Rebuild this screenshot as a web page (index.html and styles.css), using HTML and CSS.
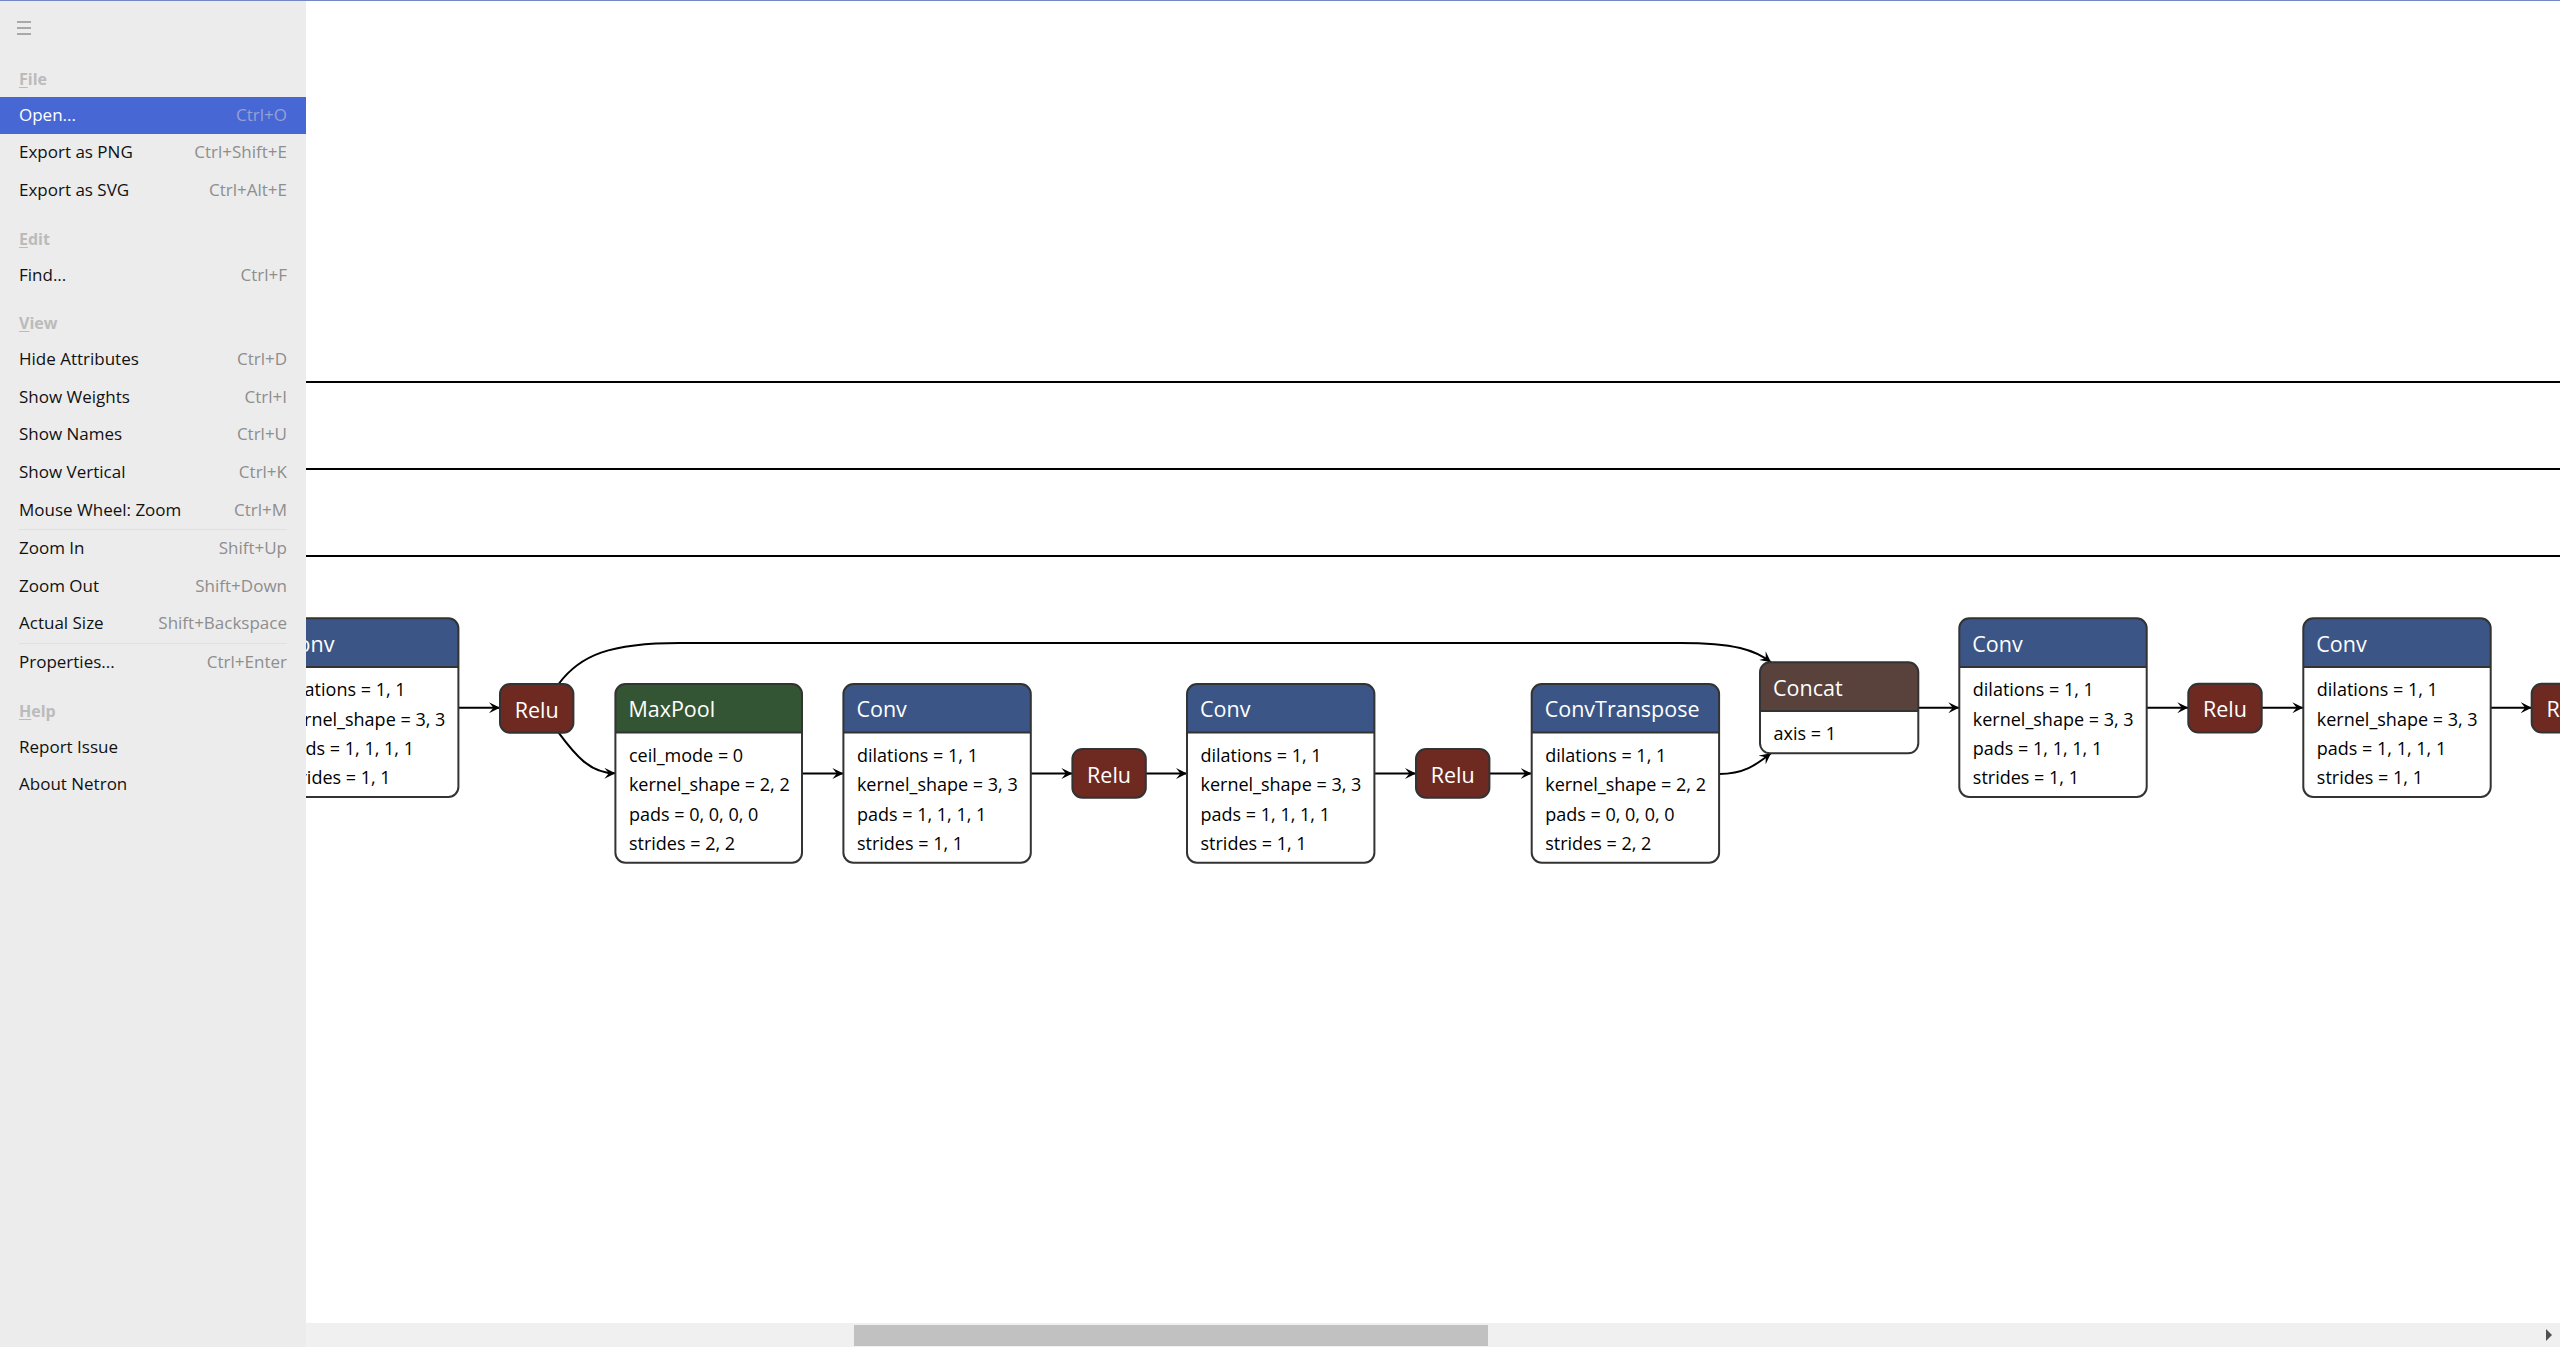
FILE: index.html
```html
<!DOCTYPE html>
<html lang="en">
<head>
<meta charset="utf-8">
<title>Netron</title>
<link rel="stylesheet" href="styles.css">
</head>
<body>
<div class="app">
  <aside class="menu">
    <div class="menu-top">
      <button class="hamburger" aria-label="Menu">
        <svg width="14" height="14" viewBox="0 0 14 14"><path d="M0 1H14M0 7H14M0 13H14" stroke="#a8a8a8" stroke-width="2"/></svg>
      </button>
    </div>
    <div class="group">
      <div class="group-header"><u>F</u>ile</div>
      <div class="item active"><span>Open...</span><span class="key">Ctrl+O</span></div>
      <div class="item"><span>Export as PNG</span><span class="key">Ctrl+Shift+E</span></div>
      <div class="item"><span>Export as SVG</span><span class="key">Ctrl+Alt+E</span></div>
    </div>
    <div class="group">
      <div class="group-header"><u>E</u>dit</div>
      <div class="item"><span>Find...</span><span class="key">Ctrl+F</span></div>
    </div>
    <div class="group">
      <div class="group-header"><u>V</u>iew</div>
      <div class="item"><span>Hide Attributes</span><span class="key">Ctrl+D</span></div>
      <div class="item"><span>Show Weights</span><span class="key">Ctrl+I</span></div>
      <div class="item"><span>Show Names</span><span class="key">Ctrl+U</span></div>
      <div class="item"><span>Show Vertical</span><span class="key">Ctrl+K</span></div>
      <div class="item"><span>Mouse Wheel: Zoom</span><span class="key">Ctrl+M</span></div>
      <div class="sep"></div>
      <div class="item"><span>Zoom In</span><span class="key">Shift+Up</span></div>
      <div class="item"><span>Zoom Out</span><span class="key">Shift+Down</span></div>
      <div class="item"><span>Actual Size</span><span class="key">Shift+Backspace</span></div>
      <div class="sep"></div>
      <div class="item"><span>Properties...</span><span class="key">Ctrl+Enter</span></div>
    </div>
    <div class="group">
      <div class="group-header"><u>H</u>elp</div>
      <div class="item"><span>Report Issue</span></div>
      <div class="item"><span>About Netron</span></div>
    </div>
  </aside>

  <main class="canvas">
    <div class="graph">
      <svg class="graph-svg" xmlns="http://www.w3.org/2000/svg">
        <defs>
          <marker id="arrow" viewBox="0 0 10 10" refX="10" refY="5" markerWidth="11" markerHeight="11" markerUnits="userSpaceOnUse" orient="auto">
            <path d="M0,0 L10,5 L0,10 L4,5 z" fill="#000"/>
          </marker>
        </defs>
        <g transform="translate(-306 -1)">
          <!-- horizontal lines -->
          <rect class="hline" x="306" y="381" width="2254" height="2"/>
          <rect class="hline" x="306" y="468" width="2254" height="2"/>
          <rect class="hline" x="306" y="555" width="2254" height="2"/>

          <!-- edges -->
          <path class="edge" d="M458,707.7 H500"/>
          <path class="edge" d="M558.6,684 C580,655 610,643 680,643 H1680 C1735,643 1755,650 1771,662.3"/>
          <path class="edge" d="M558.6,732.7 C575,755 590,773.3 615.4,773.3"/>
          <path class="edge" d="M802,773.5 H843.4"/>
          <path class="edge" d="M1031,773.5 H1072.4"/>
          <path class="edge" d="M1146,773.5 H1187"/>
          <path class="edge" d="M1374.6,773.5 H1416"/>
          <path class="edge" d="M1489.8,773.5 H1531.7"/>
          <path class="edge" d="M1719,774 C1745,774 1757,764 1771,753.3"/>
          <path class="edge" d="M1918.3,707.7 H1959.3"/>
          <path class="edge" d="M2146.7,707.7 H2188.3"/>
          <path class="edge" d="M2262,707.7 H2303.3"/>
          <path class="edge" d="M2490.7,707.7 H2531.7"/>

          <!-- Conv A -->
          <g transform="translate(271 618.3)">
            <path class="hdr layer" d="M0,48.6 V10 A10,10 0 0 1 10,0 H177.4 A10,10 0 0 1 187.4,10 V48.6 Z"/>
            <path class="body" d="M0,48.6 H187.4 V168.7 A10,10 0 0 1 177.4,178.7 H10 A10,10 0 0 1 0,168.7 Z"/>
            <rect class="outline" width="187.4" height="178.7" rx="10"/>
            <line class="divider" x1="0" y1="48.6" x2="187.4" y2="48.6"/>
            <text class="title" x="13" y="33.4">Conv</text>
            <text class="attr" x="13.5" y="78.2">dilations = 1, 1</text>
            <text class="attr" x="13.5" y="107.4">kernel_shape = 3, 3</text>
            <text class="attr" x="13.5" y="136.6">pads = 1, 1, 1, 1</text>
            <text class="attr" x="13.5" y="165.8">strides = 1, 1</text>
          </g>

          <!-- Relu 1 -->
          <g transform="translate(500 684)">
            <rect class="relu" width="73.4" height="48.7" rx="10"/>
            <text class="title mid" x="36.7" y="33.5">Relu</text>
          </g>

          <!-- MaxPool -->
          <g transform="translate(615.4 684)">
            <path class="hdr pool" d="M0,48.6 V10 A10,10 0 0 1 10,0 H176.6 A10,10 0 0 1 186.6,10 V48.6 Z"/>
            <path class="body" d="M0,48.6 H186.6 V168.7 A10,10 0 0 1 176.6,178.7 H10 A10,10 0 0 1 0,168.7 Z"/>
            <rect class="outline" width="186.6" height="178.7" rx="10"/>
            <line class="divider" x1="0" y1="48.6" x2="186.6" y2="48.6"/>
            <text class="title" x="13" y="33.4">MaxPool</text>
            <text class="attr" x="13.5" y="78.2">ceil_mode = 0</text>
            <text class="attr" x="13.5" y="107.4">kernel_shape = 2, 2</text>
            <text class="attr" x="13.5" y="136.6">pads = 0, 0, 0, 0</text>
            <text class="attr" x="13.5" y="165.8">strides = 2, 2</text>
          </g>

          <!-- Conv B -->
          <g transform="translate(843.4 684)">
            <path class="hdr layer" d="M0,48.6 V10 A10,10 0 0 1 10,0 H177.4 A10,10 0 0 1 187.4,10 V48.6 Z"/>
            <path class="body" d="M0,48.6 H187.4 V168.7 A10,10 0 0 1 177.4,178.7 H10 A10,10 0 0 1 0,168.7 Z"/>
            <rect class="outline" width="187.4" height="178.7" rx="10"/>
            <line class="divider" x1="0" y1="48.6" x2="187.4" y2="48.6"/>
            <text class="title" x="13" y="33.4">Conv</text>
            <text class="attr" x="13.5" y="78.2">dilations = 1, 1</text>
            <text class="attr" x="13.5" y="107.4">kernel_shape = 3, 3</text>
            <text class="attr" x="13.5" y="136.6">pads = 1, 1, 1, 1</text>
            <text class="attr" x="13.5" y="165.8">strides = 1, 1</text>
          </g>

          <!-- Relu 2 -->
          <g transform="translate(1072.4 749)">
            <rect class="relu" width="73.4" height="48.7" rx="10"/>
            <text class="title mid" x="36.7" y="33.5">Relu</text>
          </g>

          <!-- Conv C -->
          <g transform="translate(1187 684)">
            <path class="hdr layer" d="M0,48.6 V10 A10,10 0 0 1 10,0 H177.4 A10,10 0 0 1 187.4,10 V48.6 Z"/>
            <path class="body" d="M0,48.6 H187.4 V168.7 A10,10 0 0 1 177.4,178.7 H10 A10,10 0 0 1 0,168.7 Z"/>
            <rect class="outline" width="187.4" height="178.7" rx="10"/>
            <line class="divider" x1="0" y1="48.6" x2="187.4" y2="48.6"/>
            <text class="title" x="13" y="33.4">Conv</text>
            <text class="attr" x="13.5" y="78.2">dilations = 1, 1</text>
            <text class="attr" x="13.5" y="107.4">kernel_shape = 3, 3</text>
            <text class="attr" x="13.5" y="136.6">pads = 1, 1, 1, 1</text>
            <text class="attr" x="13.5" y="165.8">strides = 1, 1</text>
          </g>

          <!-- Relu 3 -->
          <g transform="translate(1416 749)">
            <rect class="relu" width="73.4" height="48.7" rx="10"/>
            <text class="title mid" x="36.7" y="33.5">Relu</text>
          </g>

          <!-- ConvTranspose -->
          <g transform="translate(1531.7 684)">
            <path class="hdr layer" d="M0,48.6 V10 A10,10 0 0 1 10,0 H177.4 A10,10 0 0 1 187.4,10 V48.6 Z"/>
            <path class="body" d="M0,48.6 H187.4 V168.7 A10,10 0 0 1 177.4,178.7 H10 A10,10 0 0 1 0,168.7 Z"/>
            <rect class="outline" width="187.4" height="178.7" rx="10"/>
            <line class="divider" x1="0" y1="48.6" x2="187.4" y2="48.6"/>
            <text class="title" x="13" y="33.4">ConvTranspose</text>
            <text class="attr" x="13.5" y="78.2">dilations = 1, 1</text>
            <text class="attr" x="13.5" y="107.4">kernel_shape = 2, 2</text>
            <text class="attr" x="13.5" y="136.6">pads = 0, 0, 0, 0</text>
            <text class="attr" x="13.5" y="165.8">strides = 2, 2</text>
          </g>

          <!-- Concat -->
          <g transform="translate(1760 662.3)">
            <path class="hdr shape" d="M0,48.7 V10 A10,10 0 0 1 10,0 H148.3 A10,10 0 0 1 158.3,10 V48.7 Z"/>
            <path class="body" d="M0,48.7 H158.3 V81 A10,10 0 0 1 148.3,91 H10 A10,10 0 0 1 0,81 Z"/>
            <rect class="outline" width="158.3" height="91" rx="10"/>
            <line class="divider" x1="0" y1="48.7" x2="158.3" y2="48.7"/>
            <text class="title" x="13" y="34.2">Concat</text>
            <text class="attr" x="13.5" y="77.7">axis = 1</text>
          </g>

          <!-- Conv D -->
          <g transform="translate(1959.3 618.3)">
            <path class="hdr layer" d="M0,48.6 V10 A10,10 0 0 1 10,0 H177.4 A10,10 0 0 1 187.4,10 V48.6 Z"/>
            <path class="body" d="M0,48.6 H187.4 V168.7 A10,10 0 0 1 177.4,178.7 H10 A10,10 0 0 1 0,168.7 Z"/>
            <rect class="outline" width="187.4" height="178.7" rx="10"/>
            <line class="divider" x1="0" y1="48.6" x2="187.4" y2="48.6"/>
            <text class="title" x="13" y="33.4">Conv</text>
            <text class="attr" x="13.5" y="78.2">dilations = 1, 1</text>
            <text class="attr" x="13.5" y="107.4">kernel_shape = 3, 3</text>
            <text class="attr" x="13.5" y="136.6">pads = 1, 1, 1, 1</text>
            <text class="attr" x="13.5" y="165.8">strides = 1, 1</text>
          </g>

          <!-- Relu 4 -->
          <g transform="translate(2188.3 683.7)">
            <rect class="relu" width="73.4" height="48.7" rx="10"/>
            <text class="title mid" x="36.7" y="33.5">Relu</text>
          </g>

          <!-- Conv E -->
          <g transform="translate(2303.3 618.3)">
            <path class="hdr layer" d="M0,48.6 V10 A10,10 0 0 1 10,0 H177.4 A10,10 0 0 1 187.4,10 V48.6 Z"/>
            <path class="body" d="M0,48.6 H187.4 V168.7 A10,10 0 0 1 177.4,178.7 H10 A10,10 0 0 1 0,168.7 Z"/>
            <rect class="outline" width="187.4" height="178.7" rx="10"/>
            <line class="divider" x1="0" y1="48.6" x2="187.4" y2="48.6"/>
            <text class="title" x="13" y="33.4">Conv</text>
            <text class="attr" x="13.5" y="78.2">dilations = 1, 1</text>
            <text class="attr" x="13.5" y="107.4">kernel_shape = 3, 3</text>
            <text class="attr" x="13.5" y="136.6">pads = 1, 1, 1, 1</text>
            <text class="attr" x="13.5" y="165.8">strides = 1, 1</text>
          </g>

          <!-- Relu 5 (clipped) -->
          <g transform="translate(2531.7 683.7)">
            <rect class="relu" width="73.4" height="48.7" rx="10"/>
            <text class="title mid" x="36.7" y="33.5">Relu</text>
          </g>
        </g>
      </svg>
    </div>
    <div class="hscroll">
      <div class="thumb"></div>
      <div class="arrow-right"></div>
    </div>
  </main>
</div>
</body>
</html>
```

FILE: styles.css
```css
html, body {
  margin: 0;
  padding: 0;
  background: #ffffff;
  overflow: hidden;
}

.app {
  display: flex;
  height: 1347px;
  box-sizing: border-box;
  border-top: 1px solid #7486c4;
  font-family: "Open Sans", "Noto Sans", sans-serif;
}

/* ---------- menu ---------- */
.menu {
  flex: none;
  width: 306px;
  background: #ececec;
  position: relative;
  z-index: 2;
}

.menu-top {
  height: 66.8px;
  padding: 20px 0 0 17px;
  box-sizing: border-box;
}

.hamburger {
  display: block;
  padding: 0;
  margin: 0;
  border: 0;
  background: transparent;
  width: 14px;
  height: 14px;
}
.hamburger svg { display: block; }

.group {
  margin-bottom: 18px;
}
.group:last-child { margin-bottom: 0; }

.group-header {
  height: 29px;
  line-height: 22px;
  padding: 0 19px;
  font-size: 16px;
  font-weight: 700;
  color: #bbbbbb;
  box-sizing: border-box;
}
.group-header u {
  text-decoration-thickness: 1px;
  text-underline-offset: 2px;
}

.item {
  display: flex;
  justify-content: space-between;
  height: 37.6px;
  line-height: 36px;
  padding: 0 19px;
  font-size: 17px;
  color: #111111;
  white-space: nowrap;
  box-sizing: border-box;
}
.item .key {
  color: #8e8e8e;
}
.item.active {
  background: #4767d5;
  color: #ffffff;
}
.item.active .key {
  color: #95a0d6;
}

.sep {
  height: 1px;
  background: #e0e0e0;
  margin: 0 19px;
}

/* ---------- canvas ---------- */
.canvas {
  flex: 1;
  min-width: 0;
  display: flex;
  flex-direction: column;
}

.graph {
  flex: 1;
  overflow: hidden;
}

.graph-svg {
  display: block;
  width: 100%;
  height: 100%;
  font-family: "Open Sans", "Noto Sans", sans-serif;
}

.hline { fill: #000000; }

.edge {
  fill: none;
  stroke: #000000;
  stroke-width: 2;
  marker-end: url(#arrow);
}

.hdr { stroke: none; }
.hdr.layer { fill: #3b5586; }
.hdr.pool { fill: #335533; }
.hdr.shape { fill: #59423b; }
.body { fill: #ffffff; }
.outline {
  fill: none;
  stroke: #333333;
  stroke-width: 2;
}
.divider {
  stroke: #333333;
  stroke-width: 2;
}
.relu {
  fill: #6e2a21;
  stroke: #333333;
  stroke-width: 2;
}

.title {
  fill: #ffffff;
  font-size: 21.5px;
}
.title.mid { text-anchor: middle; }

.attr {
  fill: #000000;
  font-size: 18px;
}

/* ---------- scrollbar ---------- */
.hscroll {
  flex: none;
  height: 24px;
  background: #f0f0f0;
  display: flex;
  align-items: center;
  padding-left: 548px;
}
.thumb {
  width: 634px;
  height: 21px;
  background: #c1c1c1;
}
.arrow-right {
  margin-left: auto;
  margin-right: 8px;
  width: 0;
  height: 0;
  border-left: 6px solid #505050;
  border-top: 6px solid transparent;
  border-bottom: 6px solid transparent;
}
```
